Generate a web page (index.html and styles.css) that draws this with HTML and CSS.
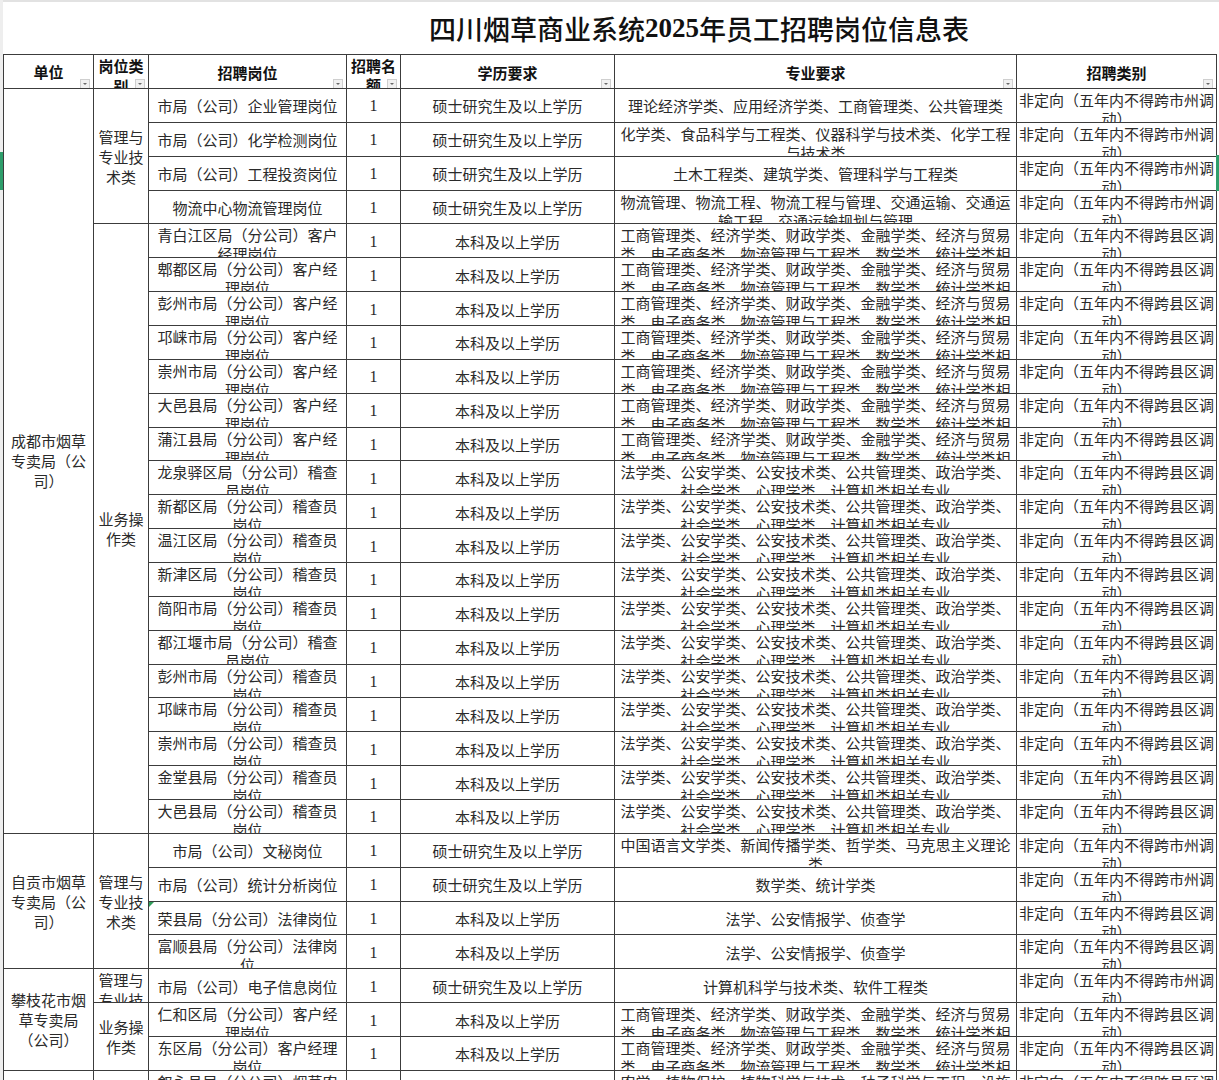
FILE: index.html
```html
<!DOCTYPE html>
<html lang="zh-CN">
<head>
<meta charset="utf-8">
<title>四川烟草商业系统2025年员工招聘岗位信息表</title>
<link rel="stylesheet" href="styles.css">
</head>
<body>
<div class="page">
  <div class="title">四川烟草商业系统<span class="num">2025</span>年员工招聘岗位信息表</div>
  <div class="sheet">
    <div class="cell h c1">单位<i class="dd"></i></div>
    <div class="cell h c2">岗位类别<i class="dd"></i></div>
    <div class="cell h c3">招聘岗位<i class="dd"></i></div>
    <div class="cell h c4">招聘名额<i class="dd"></i></div>
    <div class="cell h c5">学历要求<i class="dd"></i></div>
    <div class="cell h c6">专业要求<i class="dd"></i></div>
    <div class="cell h c7">招聘类别<i class="dd"></i></div>

    <!-- 成都 -->
    <div class="cell c1 span22">成都市烟草专卖局（公司）</div>
    <div class="cell c2 span4">管理与专业技术类</div>
    <div class="cell c3">市局（公司）企业管理岗位</div><div class="cell c4">1</div><div class="cell c5">硕士研究生及以上学历</div><div class="cell c6">理论经济学类、应用经济学类、工商管理类、公共管理类</div><div class="cell c7">非定向（五年内不得跨市州调动）</div>
    <div class="cell c3">市局（公司）化学检测岗位</div><div class="cell c4">1</div><div class="cell c5">硕士研究生及以上学历</div><div class="cell c6">化学类、食品科学与工程类、仪器科学与技术类、化学工程与技术类</div><div class="cell c7">非定向（五年内不得跨市州调动）</div>
    <div class="cell c3">市局（公司）工程投资岗位</div><div class="cell c4">1</div><div class="cell c5">硕士研究生及以上学历</div><div class="cell c6">土木工程类、建筑学类、管理科学与工程类</div><div class="cell c7">非定向（五年内不得跨市州调动）</div>
    <div class="cell c3">物流中心物流管理岗位</div><div class="cell c4">1</div><div class="cell c5">硕士研究生及以上学历</div><div class="cell c6">物流管理、物流工程、物流工程与管理、交通运输、交通运输工程、交通运输规划与管理</div><div class="cell c7">非定向（五年内不得跨市州调动）</div>

    <div class="cell c2 span18">业务操作类</div>
    <div class="cell c3">青白江区局（分公司）客户经理岗位</div><div class="cell c4">1</div><div class="cell c5">本科及以上学历</div><div class="cell c6">工商管理类、经济学类、财政学类、金融学类、经济与贸易类、电子商务类、物流管理与工程类、数学类、统计学类相关专业</div><div class="cell c7">非定向（五年内不得跨县区调动）</div>
    <div class="cell c3">郫都区局（分公司）客户经理岗位</div><div class="cell c4">1</div><div class="cell c5">本科及以上学历</div><div class="cell c6">工商管理类、经济学类、财政学类、金融学类、经济与贸易类、电子商务类、物流管理与工程类、数学类、统计学类相关专业</div><div class="cell c7">非定向（五年内不得跨县区调动）</div>
    <div class="cell c3">彭州市局（分公司）客户经理岗位</div><div class="cell c4">1</div><div class="cell c5">本科及以上学历</div><div class="cell c6">工商管理类、经济学类、财政学类、金融学类、经济与贸易类、电子商务类、物流管理与工程类、数学类、统计学类相关专业</div><div class="cell c7">非定向（五年内不得跨县区调动）</div>
    <div class="cell c3">邛崃市局（分公司）客户经理岗位</div><div class="cell c4">1</div><div class="cell c5">本科及以上学历</div><div class="cell c6">工商管理类、经济学类、财政学类、金融学类、经济与贸易类、电子商务类、物流管理与工程类、数学类、统计学类相关专业</div><div class="cell c7">非定向（五年内不得跨县区调动）</div>
    <div class="cell c3">崇州市局（分公司）客户经理岗位</div><div class="cell c4">1</div><div class="cell c5">本科及以上学历</div><div class="cell c6">工商管理类、经济学类、财政学类、金融学类、经济与贸易类、电子商务类、物流管理与工程类、数学类、统计学类相关专业</div><div class="cell c7">非定向（五年内不得跨县区调动）</div>
    <div class="cell c3">大邑县局（分公司）客户经理岗位</div><div class="cell c4">1</div><div class="cell c5">本科及以上学历</div><div class="cell c6">工商管理类、经济学类、财政学类、金融学类、经济与贸易类、电子商务类、物流管理与工程类、数学类、统计学类相关专业</div><div class="cell c7">非定向（五年内不得跨县区调动）</div>
    <div class="cell c3">蒲江县局（分公司）客户经理岗位</div><div class="cell c4">1</div><div class="cell c5">本科及以上学历</div><div class="cell c6">工商管理类、经济学类、财政学类、金融学类、经济与贸易类、电子商务类、物流管理与工程类、数学类、统计学类相关专业</div><div class="cell c7">非定向（五年内不得跨县区调动）</div>
    <div class="cell c3">龙泉驿区局（分公司）稽查员岗位</div><div class="cell c4">1</div><div class="cell c5">本科及以上学历</div><div class="cell c6">法学类、公安学类、公安技术类、公共管理类、政治学类、社会学类、心理学类、计算机类相关专业</div><div class="cell c7">非定向（五年内不得跨县区调动）</div>
    <div class="cell c3">新都区局（分公司）稽查员岗位</div><div class="cell c4">1</div><div class="cell c5">本科及以上学历</div><div class="cell c6">法学类、公安学类、公安技术类、公共管理类、政治学类、社会学类、心理学类、计算机类相关专业</div><div class="cell c7">非定向（五年内不得跨县区调动）</div>
    <div class="cell c3">温江区局（分公司）稽查员岗位</div><div class="cell c4">1</div><div class="cell c5">本科及以上学历</div><div class="cell c6">法学类、公安学类、公安技术类、公共管理类、政治学类、社会学类、心理学类、计算机类相关专业</div><div class="cell c7">非定向（五年内不得跨县区调动）</div>
    <div class="cell c3">新津区局（分公司）稽查员岗位</div><div class="cell c4">1</div><div class="cell c5">本科及以上学历</div><div class="cell c6">法学类、公安学类、公安技术类、公共管理类、政治学类、社会学类、心理学类、计算机类相关专业</div><div class="cell c7">非定向（五年内不得跨县区调动）</div>
    <div class="cell c3">简阳市局（分公司）稽查员岗位</div><div class="cell c4">1</div><div class="cell c5">本科及以上学历</div><div class="cell c6">法学类、公安学类、公安技术类、公共管理类、政治学类、社会学类、心理学类、计算机类相关专业</div><div class="cell c7">非定向（五年内不得跨县区调动）</div>
    <div class="cell c3">都江堰市局（分公司）稽查员岗位</div><div class="cell c4">1</div><div class="cell c5">本科及以上学历</div><div class="cell c6">法学类、公安学类、公安技术类、公共管理类、政治学类、社会学类、心理学类、计算机类相关专业</div><div class="cell c7">非定向（五年内不得跨县区调动）</div>
    <div class="cell c3">彭州市局（分公司）稽查员岗位</div><div class="cell c4">1</div><div class="cell c5">本科及以上学历</div><div class="cell c6">法学类、公安学类、公安技术类、公共管理类、政治学类、社会学类、心理学类、计算机类相关专业</div><div class="cell c7">非定向（五年内不得跨县区调动）</div>
    <div class="cell c3">邛崃市局（分公司）稽查员岗位</div><div class="cell c4">1</div><div class="cell c5">本科及以上学历</div><div class="cell c6">法学类、公安学类、公安技术类、公共管理类、政治学类、社会学类、心理学类、计算机类相关专业</div><div class="cell c7">非定向（五年内不得跨县区调动）</div>
    <div class="cell c3">崇州市局（分公司）稽查员岗位</div><div class="cell c4">1</div><div class="cell c5">本科及以上学历</div><div class="cell c6">法学类、公安学类、公安技术类、公共管理类、政治学类、社会学类、心理学类、计算机类相关专业</div><div class="cell c7">非定向（五年内不得跨县区调动）</div>
    <div class="cell c3">金堂县局（分公司）稽查员岗位</div><div class="cell c4">1</div><div class="cell c5">本科及以上学历</div><div class="cell c6">法学类、公安学类、公安技术类、公共管理类、政治学类、社会学类、心理学类、计算机类相关专业</div><div class="cell c7">非定向（五年内不得跨县区调动）</div>
    <div class="cell c3">大邑县局（分公司）稽查员岗位</div><div class="cell c4">1</div><div class="cell c5">本科及以上学历</div><div class="cell c6">法学类、公安学类、公安技术类、公共管理类、政治学类、社会学类、心理学类、计算机类相关专业</div><div class="cell c7">非定向（五年内不得跨县区调动）</div>

    <!-- 自贡 -->
    <div class="cell c1 span4">自贡市烟草专卖局（公司）</div>
    <div class="cell c2 span4">管理与专业技术类</div>
    <div class="cell c3">市局（公司）文秘岗位</div><div class="cell c4">1</div><div class="cell c5">硕士研究生及以上学历</div><div class="cell c6">中国语言文学类、新闻传播学类、哲学类、马克思主义理论类</div><div class="cell c7">非定向（五年内不得跨市州调动）</div>
    <div class="cell c3">市局（公司）统计分析岗位</div><div class="cell c4">1</div><div class="cell c5">硕士研究生及以上学历</div><div class="cell c6">数学类、统计学类</div><div class="cell c7">非定向（五年内不得跨市州调动）</div>
    <div class="cell c3 flag">荣县局（分公司）法律岗位</div><div class="cell c4">1</div><div class="cell c5">本科及以上学历</div><div class="cell c6">法学、公安情报学、侦查学</div><div class="cell c7">非定向（五年内不得跨县区调动）</div>
    <div class="cell c3">富顺县局（分公司）法律岗位</div><div class="cell c4">1</div><div class="cell c5">本科及以上学历</div><div class="cell c6">法学、公安情报学、侦查学</div><div class="cell c7">非定向（五年内不得跨县区调动）</div>

    <!-- 攀枝花 -->
    <div class="cell c1 span3">攀枝花市烟草专卖局（公司）</div>
    <div class="cell c2">管理与专业技术类</div>
    <div class="cell c3">市局（公司）电子信息岗位</div><div class="cell c4">1</div><div class="cell c5">硕士研究生及以上学历</div><div class="cell c6">计算机科学与技术类、软件工程类</div><div class="cell c7">非定向（五年内不得跨市州调动）</div>
    <div class="cell c2 span2">业务操作类</div>
    <div class="cell c3">仁和区局（分公司）客户经理岗位</div><div class="cell c4">1</div><div class="cell c5">本科及以上学历</div><div class="cell c6">工商管理类、经济学类、财政学类、金融学类、经济与贸易类、电子商务类、物流管理与工程类、数学类、统计学类相关专业</div><div class="cell c7">非定向（五年内不得跨县区调动）</div>
    <div class="cell c3">东区局（分公司）客户经理岗位</div><div class="cell c4">1</div><div class="cell c5">本科及以上学历</div><div class="cell c6">工商管理类、经济学类、财政学类、金融学类、经济与贸易类、电子商务类、物流管理与工程类、数学类、统计学类相关专业</div><div class="cell c7">非定向（五年内不得跨县区调动）</div>

    <!-- 泸州 -->
    <div class="cell c1"></div>
    <div class="cell c2"></div>
    <div class="cell c3">叙永县局（分公司）烟草农业技术岗位</div><div class="cell c4">1</div><div class="cell c5">本科及以上学历</div><div class="cell c6">农学、植物保护、植物科学与技术、种子科学与工程、设施农业科学与工程</div><div class="cell c7">非定向（五年内不得跨县区调动）</div>
  </div>
  <i class="mark mark-left"></i>
  <i class="mark mark-right"></i>
</div>
</body>
</html>
```
FILE: styles.css
```css
html, body {
  margin: 0;
  padding: 0;
  background: #ffffff;
}

body {
  font-family: "Noto Sans CJK SC", "Noto Sans", sans-serif;
  color: #2a2a2a;
  overflow: hidden;
}

.page {
  position: relative;
  border-left: 3px solid #eeeeee;
  width: 1216px;
}

.title {
  height: 52px;
  border-top: 2px solid #e2e2e2;
  display: flex;
  align-items: center;
  justify-content: center;
  padding-left: 176px;
  font-size: 27px;
  font-weight: 500;
  color: #111111;
}

.title .num {
  font-family: "Liberation Serif", serif;
  font-weight: 700;
}

.sheet {
  display: grid;
  grid-template-columns: 89px 54px 197px 53px 213px 401px 199px;
  grid-template-rows: 33px;
  grid-auto-rows: 32.86px;
  gap: 1px;
  width: max-content;
  background: #3c3c3c;
  border: 1px solid #3c3c3c;
}

.cell {
  position: relative;
  background: #ffffff;
  display: flex;
  align-items: center;
  align-items: safe center;
  justify-content: center;
  text-align: center;
  overflow: hidden;
  padding: 1px 4px 0;
  font-size: 15px;
  line-height: 19px;
  min-width: 0;
  min-height: 0;
}

.c1 { grid-column: 1; line-height: 20px; }
.c2 { grid-column: 2; padding: 1px 2px 0; line-height: 20px; }
.c3 { grid-column: 3; }
.c4 { grid-column: 4; font-family: "Liberation Serif", serif; font-size: 16px; padding: 1px 1px 0; }
.c5 { grid-column: 5; }
.c6 { grid-column: 6; }
.c7 { grid-column: 7; padding: 1px 1px 0; }

.span2 { grid-row: span 2; }
.span3 { grid-row: span 3; }
.span4 { grid-row: span 4; }
.span18 { grid-row: span 18; }
.span22 { grid-row: span 22; }

.h {
  font-weight: 700;
  color: #111111;
  font-family: "Noto Sans CJK SC", sans-serif;
  font-size: 15px;
}

.dd {
  position: absolute;
  right: 3px;
  bottom: 0;
  width: 8px;
  height: 8px;
  background: #f1f1f1;
  border: 1px solid #cfcfcf;
  border-bottom: none;
}

.dd::after {
  content: "";
  position: absolute;
  left: 2px;
  top: 3px;
  border-left: 2px solid transparent;
  border-right: 2px solid transparent;
  border-top: 2px solid #6a6a6a;
}

.flag::before {
  content: "";
  position: absolute;
  left: 0;
  top: 0;
  border-top: 5px solid #2f9d5a;
  border-right: 5px solid transparent;
}

.mark {
  position: absolute;
  width: 3px;
  background: #2e9e6b;
}

.mark-left {
  left: -3px;
  top: 152px;
  height: 38px;
}

.mark-right {
  left: 1213px;
  top: 155px;
  height: 36px;
}
```
